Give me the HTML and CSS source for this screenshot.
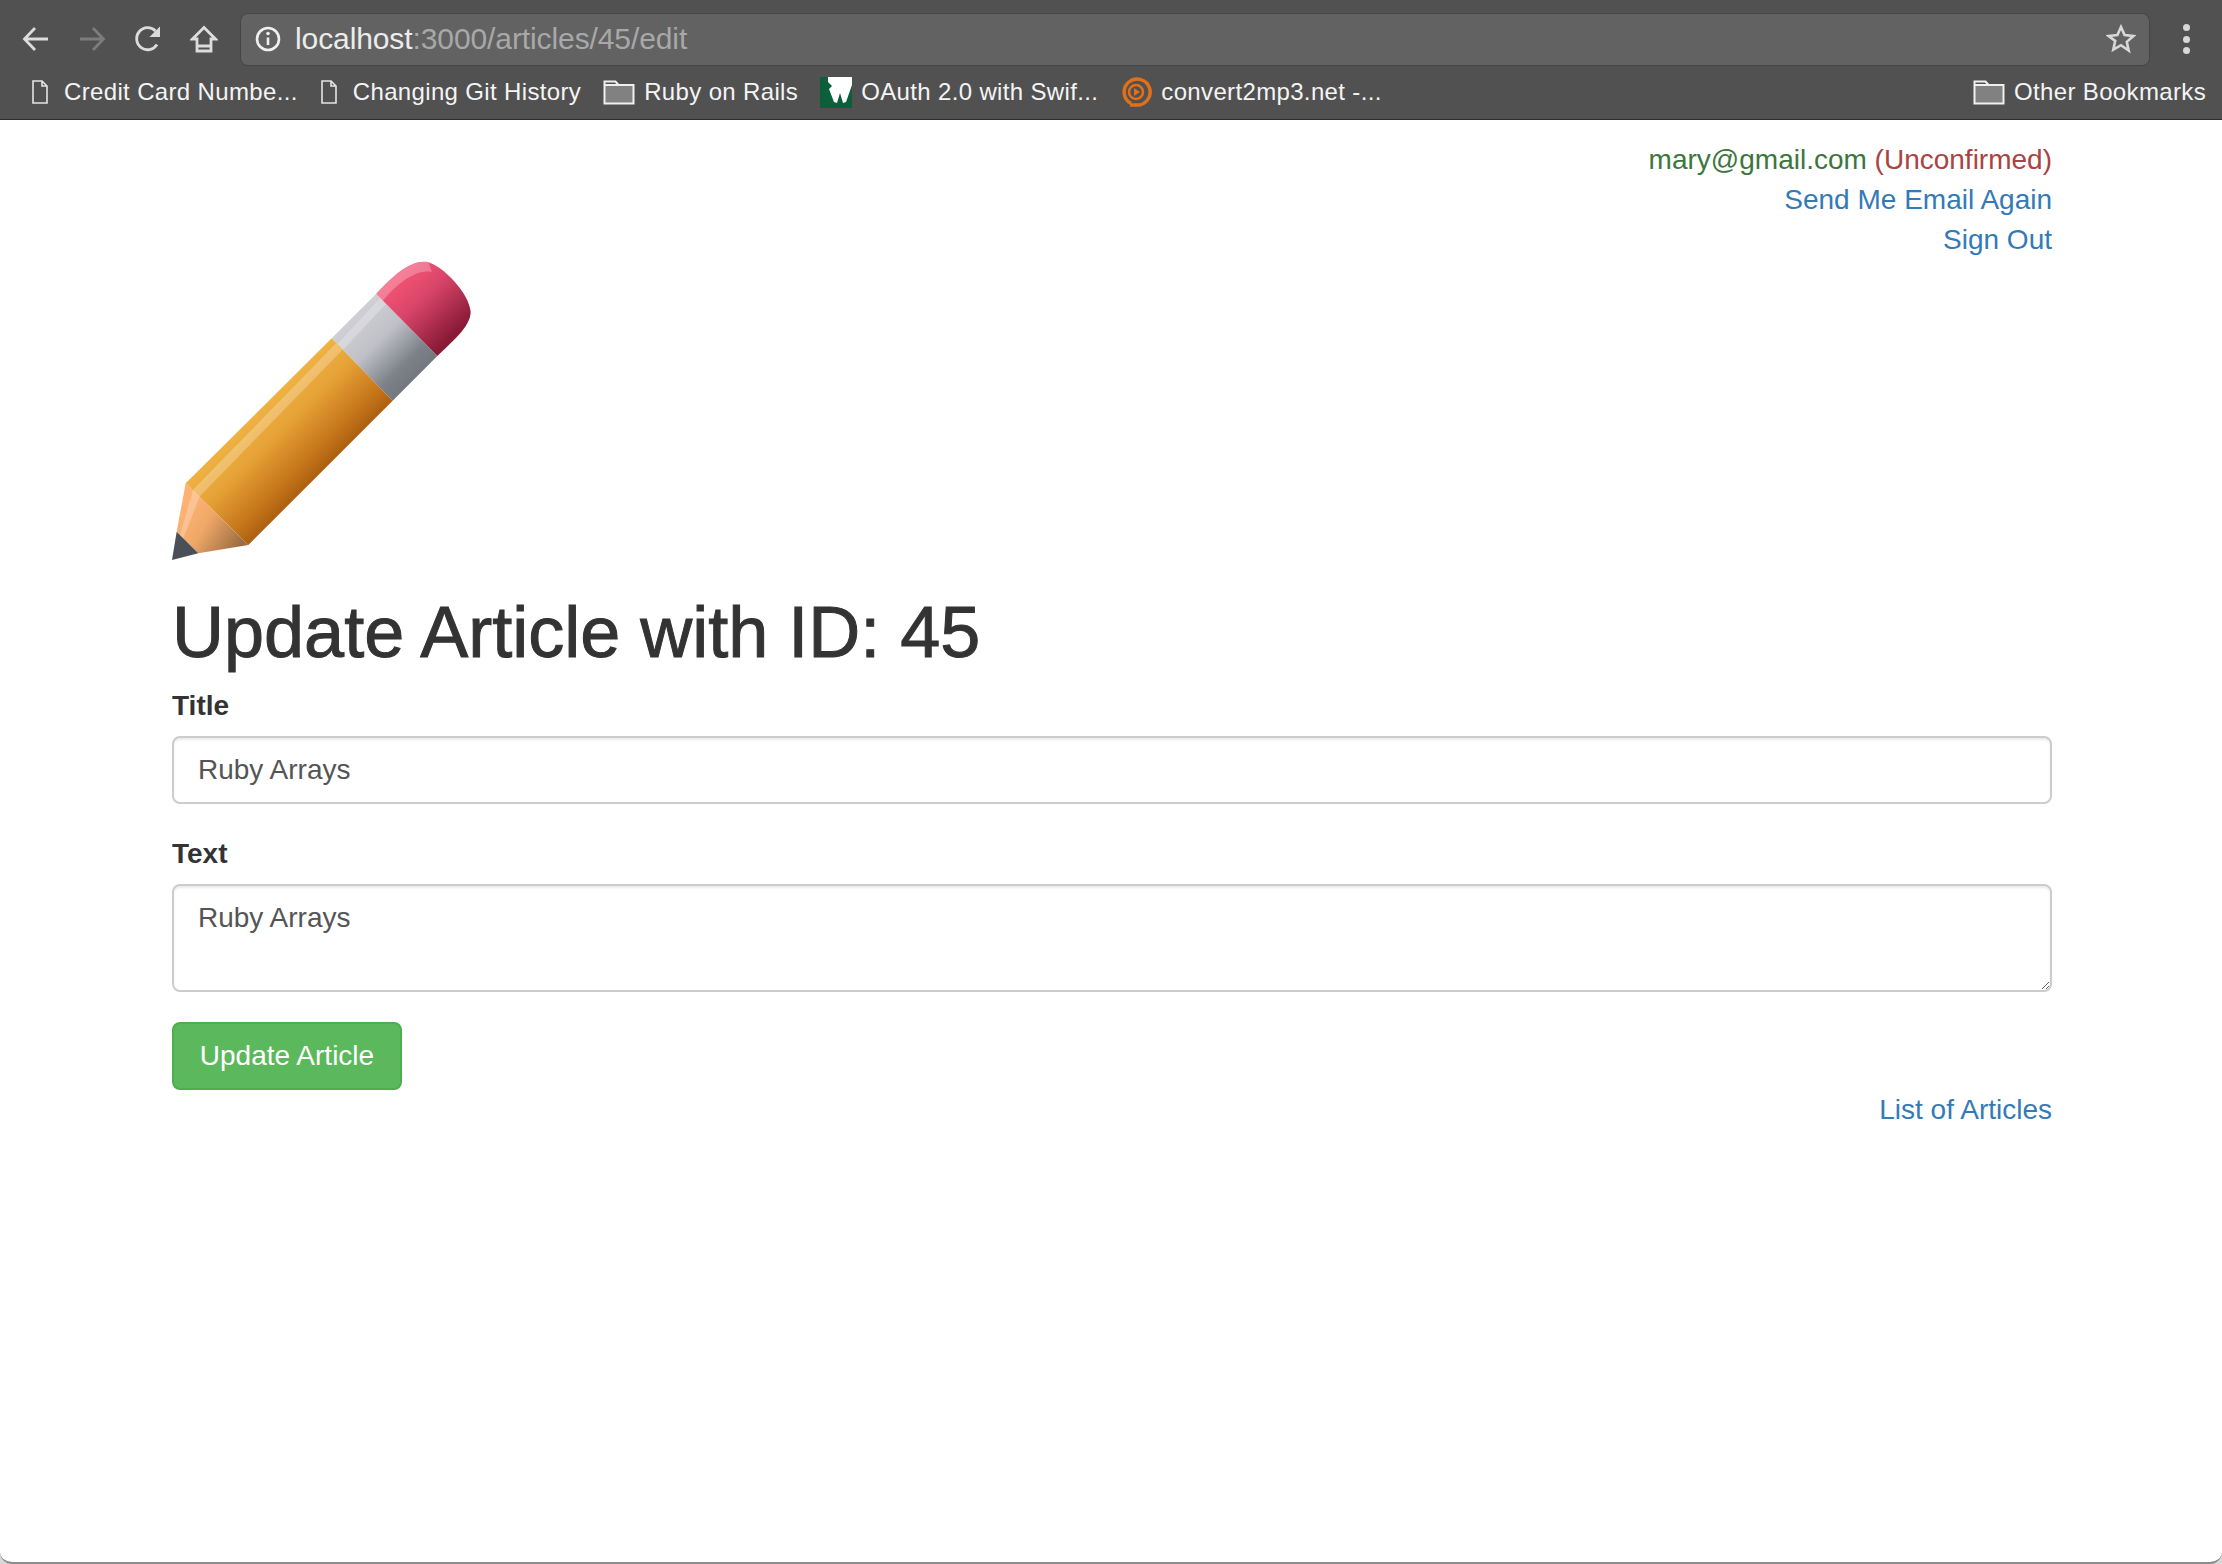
FILE: index.html
```html
<!DOCTYPE html>
<html lang="en">
<head>
<meta charset="utf-8">
<title>Update Article</title>
<link rel="stylesheet" href="styles.css">
</head>
<body>
<header class="chrome">
  <div class="toolbar">
    <svg class="nav nav-back" viewBox="0 0 28 28"><path d="M26 14H3M13 3L2.5 14 13 25"/></svg>
    <svg class="nav nav-fwd" viewBox="0 0 28 28"><path d="M2 14H25M15 3l10.500 11L15 25"/></svg>
    <svg class="nav nav-reload" viewBox="0 0 28 28"><path d="M23 19.500A11 11 0 1 1 21.500 6"/><path class="solid" d="M26 1.500V12H15.500z"/></svg>
    <svg class="nav nav-home" viewBox="0 0 28 28"><path d="M14 2.500L2.500 14H7v12h14V14h4.500zM7 21h14"/></svg>
    <div class="omnibox">
      <svg class="info" viewBox="0 0 26 26"><circle cx="13" cy="13" r="11"/><path d="M13 11.500V19"/><circle class="solid" cx="13" cy="7.500" r="1.800"/></svg>
      <span class="url"><span class="host">localhost</span>:3000/articles/45/edit</span>
      <svg class="star" viewBox="0 0 30 30"><path d="M15 3l3.600 8.100 8.800.9-6.600 5.900 1.900 8.700L15 21.200 7.300 25.600l1.900-8.700L2.600 12l8.800-.9z"/></svg>
    </div>
    <div class="menu"><i></i><i></i><i></i></div>
  </div>
  <nav class="bookmarks">
    <a class="bm bm-first"><svg class="doc" viewBox="0 0 18 24"><path d="M2 1h9l5 5v17H2zM11 1v5h5"/></svg>Credit Card Numbe...</a>
    <a class="bm"><svg class="doc" viewBox="0 0 18 24"><path d="M2 1h9l5 5v17H2zM11 1v5h5"/></svg>Changing Git History</a>
    <a class="bm"><svg class="folder" viewBox="0 0 32 25"><path class="fill" d="M1.500 5h29v18.500h-29z"/><path d="M1.500 23.500V1.500h11l3 3.500h15v18.500zM1.500 5h14"/></svg>Ruby on Rails</a>
    <a class="bm"><svg class="fav" viewBox="0 0 32 32"><rect y="1" width="32" height="31" fill="#0b5f3a"/><path fill="#fff" d="M8 1h24v8l-6 17-3 1-3-10-3 10-3-1-5-13 3-3-4-4z"/></svg>OAuth 2.0 with Swif...</a>
    <a class="bm"><svg class="fav" viewBox="0 0 32 32"><path class="ring" d="M11 27.500A13 13 0 1 1 16 29h-6"/><circle class="ring2" cx="16" cy="16" r="7"/><path fill="#e0701a" d="M14 12l6 4-6 4z"/></svg>convert2mp3.net -...</a>
    <a class="bm bm-other"><svg class="folder" viewBox="0 0 32 25"><path class="fill" d="M1.500 5h29v18.500h-29z"/><path d="M1.500 23.500V1.500h11l3 3.500h15v18.500zM1.500 5h14"/></svg>Other Bookmarks</a>
  </nav>
</header>
<main class="page">
  <div class="container">
    <div class="account">
      <div><span class="email">mary@gmail.com</span> <span class="unconfirmed">(Unconfirmed)</span></div>
      <div><a href="#">Send Me Email Again</a></div>
      <div><a href="#">Sign Out</a></div>
    </div>
    <svg class="pencil" viewBox="66 60 900 900" role="img" aria-label="Pencil">
      <defs>
        <linearGradient id="gBody" gradientUnits="userSpaceOnUse" x1="326" y1="512" x2="511" y2="698">
          <stop offset="0" stop-color="#efb243"/><stop offset=".35" stop-color="#e5a136"/><stop offset=".75" stop-color="#c97a1c"/><stop offset="1" stop-color="#ae5f10"/>
        </linearGradient>
        <linearGradient id="gFerrule" gradientUnits="userSpaceOnUse" x1="611" y1="228" x2="795" y2="415">
          <stop offset="0" stop-color="#cfcfd5"/><stop offset=".4" stop-color="#c0c1c7"/><stop offset=".8" stop-color="#7d828a"/><stop offset="1" stop-color="#73787f"/>
        </linearGradient>
        <linearGradient id="gEraser" gradientUnits="userSpaceOnUse" x1="740" y1="120" x2="900" y2="290">
          <stop offset="0" stop-color="#f25474"/><stop offset=".4" stop-color="#d9456a"/><stop offset="1" stop-color="#8a1b37"/>
        </linearGradient>
        <linearGradient id="gWood" gradientUnits="userSpaceOnUse" x1="110" y1="790" x2="280" y2="900">
          <stop offset="0" stop-color="#fdb274"/><stop offset=".4" stop-color="#f0a868"/><stop offset="1" stop-color="#9c6d42"/>
        </linearGradient>
      </defs>
      <path fill="url(#gEraser)" d="M678 162C735 100 785 58 832 66C880 78 958 160 962 215C962 262 900 310 862 348Z"/>
      <path fill="#fff" opacity=".25" d="M678 162C735 100 785 58 832 66C838 70 842 86 846 96C800 86 740 130 698 184Z"/>
      <path fill="url(#gFerrule)" d="M545 295L678 162 862 348 728 482Z"/>
      <path fill="#fff" opacity=".25" d="M562 312L690 175 708 192 578 330Z"/>
      <path fill="url(#gBody)" d="M107 730L545 295 728 482 295 915Z"/>
      <path fill="#fff" opacity=".25" d="M130 748L558 310 577 330 150 768Z"/>
      <path fill="url(#gWood)" d="M107 730L295 915 145 940 80 875Z"/>
      <path fill="#fff" opacity=".25" d="M130 748L150 768 100 895 90 885Z"/>
      <path fill="#4b5058" d="M66 960L80 875 145 940Z"/>
    </svg>
    <h1 class="title">Update Article with ID: 45</h1>
    <form class="form">
      <label class="label" for="t">Title</label>
      <input class="field" id="t" type="text" value="Ruby Arrays">
      <label class="label label-text" for="x">Text</label>
      <textarea class="field area" id="x">Ruby Arrays</textarea>
      <button class="btn" type="button">Update Article</button>
    </form>
    <div class="list-link"><a href="#">List of Articles</a></div>
  </div>
</main>
</body>
</html>
```
FILE: styles.css
```css
* { box-sizing: border-box; }
html, body { margin: 0; height: 100%; }
body {
  display: flex;
  flex-direction: column;
  height: 1564px;
  overflow: hidden;
  background: #d8d8d8;
  font-family: "Liberation Sans", Arial, sans-serif;
  font-size: 28px;
  line-height: 40px;
  color: #333;
}
a { color: #337ab7; text-decoration: none; }

.chrome { height: 120px; flex: none; background: #515151; border-bottom: 1px solid #2e2e2e; }
.toolbar { height: 71px; display: flex; align-items: center; padding: 7px 0 0 22px; }
.nav { width: 28px; height: 28px; flex: none; fill: none; stroke: #dcdcdc; stroke-width: 2.800; margin-right: 28px; }
.nav-fwd { stroke: #7c7c7c; }
.nav .solid { fill: #dcdcdc; stroke: none; }
.nav-home { margin-right: 22px; }
.omnibox {
  width: 1910px; height: 53px; flex: none;
  display: flex; align-items: center;
  padding: 0 13px 0 14px;
  background: #626262;
  border: 1px solid #454545;
  border-radius: 8px;
}
.info { width: 26px; height: 26px; flex: none; fill: none; stroke: #f0f0f0; stroke-width: 2.600; margin-right: 14px; }
.info .solid { fill: #f0f0f0; stroke: none; }
.url { font-size: 30px; color: #a8a8a8; flex: 1; font-family: "Liberation Sans", sans-serif; letter-spacing: -.1px; }
.host { color: #ececec; }
.star { width: 30px; height: 30px; flex: none; fill: none; stroke: #d8d8d8; stroke-width: 2.600; }
.menu { flex: 1; display: flex; flex-direction: column; align-items: center; gap: 4.500px; }
.menu i { width: 7px; height: 7px; border-radius: 50%; background: #d8d8d8; }

.bookmarks { height: 48px; display: flex; align-items: center; padding: 0 16px 6px 31px; }
.bm { display: flex; align-items: center; color: #f4f4f4; font-size: 24px; line-height: 30px; letter-spacing: .35px; white-space: nowrap; margin-right: 22px; }
.bm-other { margin: 0 0 0 auto; }
.bm svg { flex: none; margin-right: 9px; }
.doc { width: 18px; height: 24px; fill: none; stroke: #e4e4e4; stroke-width: 1.600; margin-right: 15px !important; }
.folder { width: 32px; height: 25px; fill: none; stroke: #f0f0f0; stroke-width: 2; }
.folder .fill { fill: #818181; stroke: none; }
.fav { width: 32px; height: 32px; }
.ring { fill: none; stroke: #e0701a; stroke-width: 3.500; }
.ring2 { fill: none; stroke: #e0701a; stroke-width: 2.500; }

.page { flex: 1; background: #fff; border-bottom: 2px solid #8c8c8c; border-radius: 0 0 12px 12px; }
.container { margin: 0 170px 0 172px; padding-top: 20px; display: flex; flex-direction: column; }
.account { text-align: right; }
.email { color: #3c763d; }
.unconfirmed { color: #a94442; }
.pencil { display: block; width: 300px; height: 300px; flex: none; margin-top: 0; }
.title { margin: 32px 0 0; font-size: 72px; line-height: 80px; font-weight: 400; -webkit-text-stroke: 1px #333; }
.form { display: flex; flex-direction: column; align-items: flex-start; margin-top: 14px; }
.label { font-weight: 700; line-height: 40px; margin-bottom: 10px; }
.label-text { margin-top: 30px; }
.field {
  display: block; width: 100%; height: 68px;
  padding: 12px 24px;
  font: inherit; color: #555;
  background: #fff;
  border: 2px solid #ccc;
  border-radius: 8px;
  box-shadow: inset 0 2px 2px rgba(0,0,0,.075);
  outline: none;
}
.area { height: 108px; resize: vertical; }
.btn {
  margin-top: 30px; height: 68px; width: 230px;
  font: inherit; color: #fff;
  background: #5cb85c;
  border: 2px solid #4cae4c;
  border-radius: 8px;
  padding: 0;
}
.list-link { text-align: right; margin-top: 0; }
```
